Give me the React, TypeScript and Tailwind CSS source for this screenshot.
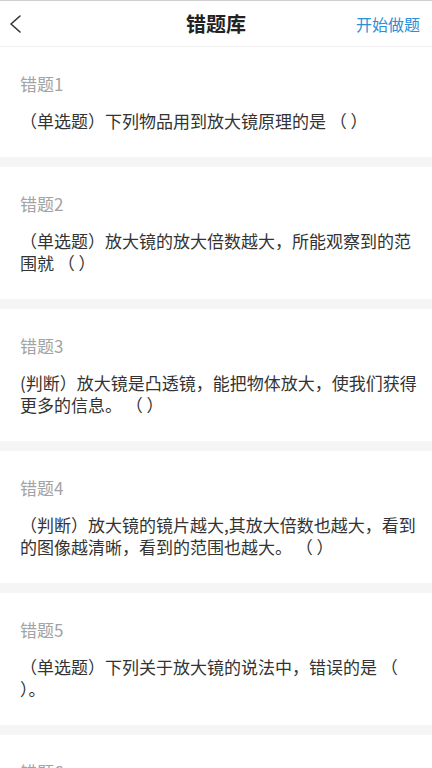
const questions = [
  { title: '错题1', text: '（单选题）下列物品用到放大镜原理的是 （ ）' },
  { title: '错题2', text: '（单选题）放大镜的放大倍数越大，所能观察到的范围就 （ ）' },
  { title: '错题3', text: '(判断）放大镜是凸透镜，能把物体放大，使我们获得更多的信息。 （ ）' },
  { title: '错题4', text: '（判断）放大镜的镜片越大,其放大倍数也越大，看到的图像越清晰，看到的范围也越大。  （ ）' },
  { title: '错题5', text: '（单选题）下列关于放大镜的说法中，错误的是 （ ）。' },
  { title: '错题6', text: '（单选题）用放大镜观察物体时，看到的是 （ ）' },
]

function BackIcon() {
  return (
    <svg width="14" height="20" viewBox="0 0 14 20" fill="none">
      <path d="M12 2 L3 10 L12 18" stroke="#333" strokeWidth="1.6" strokeLinecap="round" strokeLinejoin="round" />
    </svg>
  )
}

export default function App() {
  return (
    <div
      className="w-[432px] h-[768px] overflow-hidden bg-[#f5f5f5] border-t border-[#cfcfcf]"
      style={{ fontFamily: '"Noto Sans CJK SC", "Noto Sans", sans-serif' }}
    >
      {/* Header */}
      <div className="relative h-[46px] bg-white border-b border-[#efefef] flex items-center justify-between pl-[8px] pr-[12px]">
        <button className="w-[24px] h-[30px] flex items-center">
          <BackIcon />
        </button>
        <h1 className="absolute left-1/2 -translate-x-1/2 text-[20px] font-bold text-[#222]">错题库</h1>
        <span className="text-[16px] text-[#2b8fd6]">开始做题</span>
      </div>

      {/* Question list */}
      <div className="flex flex-col gap-[10px]">
        {questions.map((q) => (
          <div key={q.title} className="bg-white pt-[26px] pb-[25px] pl-[20px] pr-[12px]">
            <div className="text-[17px] leading-[22px] text-[#a3a3a3]">{q.title}</div>
            <p className="mt-[15px] text-[17px] leading-[22px] text-[#333]">{q.text}</p>
          </div>
        ))}
      </div>
    </div>
  )
}
